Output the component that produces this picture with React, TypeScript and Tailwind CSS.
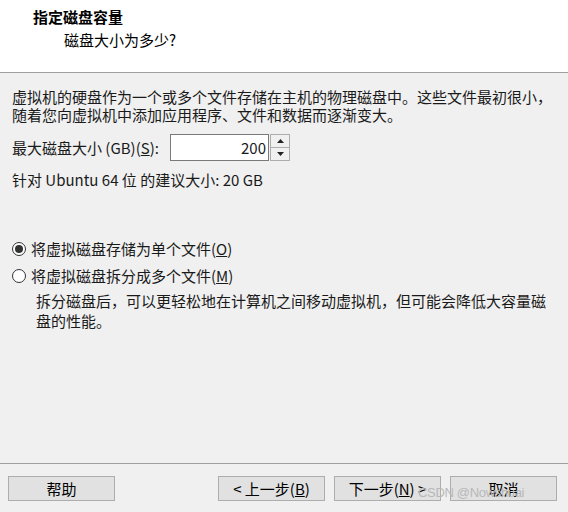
import { useState } from 'react';

const font = { fontFamily: '"Noto Sans CJK SC", "Noto Sans", sans-serif' };

function Radio({ checked, onClick, children }: { checked: boolean; onClick: () => void; children: React.ReactNode }) {
    return (
        <div className="flex items-center h-[18px] cursor-default" onClick={onClick}>
            <span className="w-[14px] h-[14px] rounded-full border border-[#333333] bg-white flex items-center justify-center mr-[5px]">
                {checked && <span className="w-[8px] h-[8px] rounded-full bg-[#333333]"></span>}
            </span>
            <span>{children}</span>
        </div>
    );
}

function Btn({ children, className = '' }: { children: React.ReactNode; className?: string }) {
    return (
        <button className={`w-[107px] h-[25px] bg-[#e1e1e1] border border-[#adadad] text-[15px] leading-[23px] text-black ${className}`}>
            {children}
        </button>
    );
}

export default function App() {
    const [single, setSingle] = useState(true);
    const [size, setSize] = useState(200);

    return (
        <div className="w-[568px] h-[512px] bg-[#f0f0f0] flex flex-col text-[#1a1a1a] relative overflow-hidden" style={font}>
            {/* header */}
            <div className="h-[73px] bg-white border-b border-[#a0a0a0] pl-[33px] pt-[7px] shrink-0">
                <div className="text-[15px] font-bold leading-[20px] text-black">指定磁盘容量</div>
                <div className="text-[15px] leading-[20px] mt-[3px] pl-[31px] text-black">磁盘大小为多少?</div>
            </div>

            <div className="px-[12px] pt-[15px] text-[15px] leading-[18px] flex-1">
                <p>虚拟机的硬盘作为一个或多个文件存储在主机的物理磁盘中。这些文件最初很小，<br />随着您向虚拟机中添加应用程序、文件和数据而逐渐变大。</p>

                <div className="flex items-center mt-[10px] h-[27px]">
                    <span className="w-[158px]">最大磁盘大小 (GB)(<span className="underline">S</span>):</span>
                    <div className="w-[99px] h-[27px] bg-white border border-[#7a7a7a] flex items-center justify-end pr-[2px] text-[15px]">{size}</div>
                    <div className="flex flex-col ml-[1px] h-[27px] w-[20px]">
                        <button className="flex-1 bg-[#f0f0f0] border border-[#adadad] flex items-center justify-center" onClick={() => setSize(size + 1)}>
                            <svg width="7" height="4" viewBox="0 0 7 4"><path d="M0 4 L3.5 0 L7 4 Z" fill="#222" /></svg>
                        </button>
                        <button className="flex-1 bg-[#f0f0f0] border border-t-0 border-[#adadad] flex items-center justify-center" onClick={() => setSize(size - 1)}>
                            <svg width="7" height="4" viewBox="0 0 7 4"><path d="M0 0 L3.5 4 L7 0 Z" fill="#222" /></svg>
                        </button>
                    </div>
                </div>

                <p className="mt-[10px]">针对 Ubuntu 64 位 的建议大小: 20 GB</p>

                <div className="mt-[51px]">
                    <Radio checked={single} onClick={() => setSingle(true)}>将虚拟磁盘存储为单个文件(<span className="underline">O</span>)</Radio>
                </div>
                <div className="mt-[9px]">
                    <Radio checked={!single} onClick={() => setSingle(false)}>将虚拟磁盘拆分成多个文件(<span className="underline">M</span>)</Radio>
                </div>
                <p className="pl-[24px] mt-[6px] leading-[20px]">拆分磁盘后，可以更轻松地在计算机之间移动虚拟机，但可能会降低大容量磁<br />盘的性能。</p>
            </div>

            {/* footer */}
            <div className="border-t border-[#a0a0a0] h-[49px] shrink-0 flex items-start pt-[12px] px-[8px]">
                <Btn>帮助</Btn>
                <Btn className="ml-auto">&lt; 上一步(<span className="underline">B</span>)</Btn>
                <Btn className="ml-[9px]">下一步(<span className="underline">N</span>) &gt;</Btn>
                <Btn className="ml-[9px] mr-[3px]">取消</Btn>
            </div>

            <div className="absolute left-[418px] top-[485px] text-[13px] leading-[16px] text-[#b8b8b8] tracking-tight" style={{ fontFamily: '"Liberation Sans", sans-serif' }}>CSDN @Nowshuai</div>
        </div>
    );
}
